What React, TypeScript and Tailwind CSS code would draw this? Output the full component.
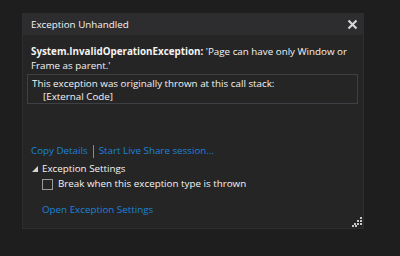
import React from "react";

export default function App() {
  const font = { fontFamily: '"Segoe UI", "Open Sans", "Noto Sans", sans-serif' };
  return (
    <div className="w-[400px] h-[256px] bg-[#1e1e1e] pt-[13px] pl-[22px]" style={font}>
      <div className="w-[342px] h-[216px] bg-[#252526] border border-[#2e2e30] flex flex-col relative text-[#f4f4f4]">
        <div className="h-[21px] bg-[#2d2d30] flex items-center justify-between pl-[8px] pr-[3px]">
          <span className="text-[9.8px] leading-none">Exception Unhandled</span>
          <svg width="11" height="11" viewBox="0 0 11 11" className="mr-[2px]">
            <path d="M1.5 1.5 L9.5 9.5 M9.5 1.5 L1.5 9.5" stroke="#d4d4d4" strokeWidth="2.2" />
          </svg>
        </div>
        <div className="pl-[8px] pr-[5px] pt-[10px] text-[9.8px] leading-[14px]">
          <div>
            <span className="font-bold">System.InvalidOperationException:</span> 'Page can have only Window or Frame as parent.'
          </div>
        </div>
        <div className="ml-[4px] mr-[5px] mt-[1px] border border-[#3f3f46] h-[30px] px-[4px] pt-[2px] text-[9.8px] leading-[13px]">
          <div>This exception was originally thrown at this call stack:</div>
          <div className="pl-[11px]">[External Code]</div>
        </div>
        <div className="mt-[40px] pl-[8px] flex items-center text-[9.8px] leading-[14px]">
          <span className="text-[#1c82d8]">Copy Details</span>
          <span className="mx-[5px] w-px h-[13px] bg-[#8a8a8a]" />
          <span className="text-[#1c82d8]">Start Live Share session...</span>
        </div>
        <div className="mt-[4px] pl-[9px] flex items-center text-[9.8px] leading-[14px]">
          <svg width="6" height="6" viewBox="0 0 6 6" className="mr-[4px]">
            <path d="M6 0 L6 6 L0 6 Z" fill="#d4d4d4" />
          </svg>
          <span>Exception Settings</span>
        </div>
        <div className="mt-[1px] pl-[19px] flex items-center text-[9.8px] leading-[14px]">
          <span className="w-[11px] h-[11px] border border-[#9a9a9a] mr-[5px]" />
          <span>Break when this exception type is thrown</span>
        </div>
        <div className="mt-[12px] pl-[19px] text-[9.8px] leading-[14px] text-[#1c82d8]">Open Exception Settings</div>
        <svg width="10" height="10" viewBox="0 0 10 10" className="absolute right-[1px] bottom-[1px]">
          <g fill="#c8c8c8">
            <rect x="8" y="0" width="2" height="2" />
            <rect x="5" y="3" width="2" height="2" />
            <rect x="8" y="3" width="2" height="2" />
            <rect x="2" y="6" width="2" height="2" />
            <rect x="5" y="6" width="2" height="2" />
            <rect x="8" y="6" width="2" height="2" />
            <rect x="0" y="8" width="2" height="2" />
            <rect x="3" y="8" width="2" height="2" />
          </g>
        </svg>
      </div>
    </div>
  );
}
